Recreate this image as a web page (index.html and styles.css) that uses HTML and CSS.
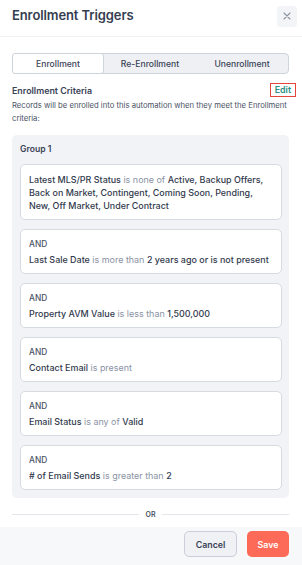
FILE: index.html
```html
<!DOCTYPE html>
<html>
<head>
<meta charset="utf-8">
<link rel="stylesheet" href="styles.css">
</head>
<body>
<div class="modal">
  <header class="head">
    <h1 class="title">Enrollment Triggers</h1>
    <button class="close" aria-label="Close">
      <svg width="8" height="8" viewBox="0 0 8 8"><path d="M1 1L7 7M7 1L1 7" stroke="#8b93a1" stroke-width="1.1" stroke-linecap="round"/></svg>
    </button>
  </header>
  <div class="body">
    <div class="tabs">
      <div class="tab active">Enrollment</div>
      <div class="tab">Re-Enrollment</div>
      <div class="tab">Unenrollment</div>
    </div>
    <div class="crit-head">
      <span class="crit-title">Enrollment Criteria</span>
      <span class="edit">Edit</span>
    </div>
    <p class="desc">Records will be enrolled into this automation when they meet the Enrollment criteria:</p>
    <div class="group">
      <div class="group-title">Group 1</div>
      <div class="card">
        <p class="rule"><b>Latest MLS/PR Status</b> <span class="op">is none of</span> <b>Active, Backup Offers, Back on Market, Contingent, Coming Soon, Pending, New, Off Market, Under Contract</b></p>
      </div>
      <div class="card">
        <div class="and">AND</div>
        <p class="rule"><b>Last Sale Date</b> <span class="op">is more than</span> <b>2 years ago or is not present</b></p>
      </div>
      <div class="card">
        <div class="and">AND</div>
        <p class="rule"><b>Property AVM Value</b> <span class="op">is less than</span> <b>1,500,000</b></p>
      </div>
      <div class="card">
        <div class="and">AND</div>
        <p class="rule"><b>Contact Email</b> <span class="op">is present</span></p>
      </div>
      <div class="card">
        <div class="and">AND</div>
        <p class="rule"><b>Email Status</b> <span class="op">is any of</span> <b>Valid</b></p>
      </div>
      <div class="card">
        <div class="and">AND</div>
        <p class="rule"><b># of Email Sends</b> <span class="op">is greater than</span> <b>2</b></p>
      </div>
    </div>
    <div class="or"><span class="line"></span><span class="or-text">OR</span><span class="line"></span></div>
  </div>
  <footer class="foot">
    <button class="btn cancel">Cancel</button>
    <button class="btn save">Save</button>
  </footer>
</div>
</body>
</html>
```
FILE: styles.css
```css
* { box-sizing: border-box; }
html, body { margin: 0; padding: 0; background: #fff; }
body { font-family: Inter, "Noto Sans", sans-serif; color: #3a4256; width: 302px; height: 565px; overflow: hidden; }
.modal { display: flex; flex-direction: column; height: 565px; }
.head { display: flex; align-items: center; justify-content: space-between; height: 37px; padding: 0 5px 0 12px; border-bottom: 1px solid #eef0f3; flex: none; }
.title { margin: 0; font-size: 13px; font-weight: 600; color: #353d50; letter-spacing: -0.1px; position: relative; top: -3px; }
.close { width: 20px; height: 21px; border: none; border-radius: 4px; background: #f3f4f7; display: flex; align-items: center; justify-content: center; padding: 0; position: relative; top: -2px; }
.body { flex: 1; padding: 16px 13px 0 12px; display: flex; flex-direction: column; }
.tabs { display: flex; height: 21px; border: 1px solid #cfd4dc; border-radius: 4px; background: #eef0f4; }
.tab { flex: 1; display: flex; align-items: center; justify-content: center; font-size: 8.6px; font-weight: 500; color: #3a4256; }
.tab.active { flex: none; width: 92px; background: #fff; border-radius: 3px; margin: -1px 0 0 -1px; height: 21px; border: 1px solid #cfd4dc; }
.crit-head { display: flex; justify-content: space-between; align-items: center; margin-top: 9px; height: 14px; }
.crit-title { font-size: 8.9px; font-weight: 600; color: #3a4256; }
.edit { font-size: 8.8px; font-weight: 600; color: #2a8f84; border: 1px solid #e5453a; padding: 1px 4px; margin-right: -7px; line-height: 10px; }
.desc { margin: 3px 0 0; font-size: 7.7px; line-height: 12.5px; color: #4a5266; }
.group { margin-top: 10px; background: #f2f3f6; border-radius: 5px; padding: 8px 7px 8px 8px; display: flex; flex-direction: column; gap: 9px; }
.group-title { font-size: 8.6px; font-weight: 600; color: #3a4256; height: 12px; line-height: 12px; }
.card { background: #fff; border: 1px solid #d6dae1; border-radius: 5px; padding: 8px 8px 7px; }
.and { font-size: 8.3px; font-weight: 500; color: #4b5366; line-height: 12px; margin-bottom: 3px; }
.rule { margin: 0; font-size: 8.95px; line-height: 13px; color: #3a4256; }
.rule b { font-weight: 500; color: #323a4d; }
.op { color: #8a92a3; }
.or { display: flex; align-items: center; gap: 7px; margin-top: 12px; }
.line { flex: 1; height: 1px; background: #e4e7ec; }
.or-text { font-size: 7px; font-weight: 600; color: #4b5366; }
.foot { flex: none; height: 38px; background: #f7f8fa; display: flex; justify-content: flex-end; align-items: center; gap: 10px; padding: 0 13px 4px 0; }
.btn { font-family: inherit; font-size: 8.8px; font-weight: 600; border-radius: 5px; height: 26px; padding: 0; }
.cancel { width: 53px; background: #eff1f4; border: 1px solid #c9ced7; color: #3a4256; }
.save { width: 42px; background: #fd6b58; border: none; color: #fff; }
```
